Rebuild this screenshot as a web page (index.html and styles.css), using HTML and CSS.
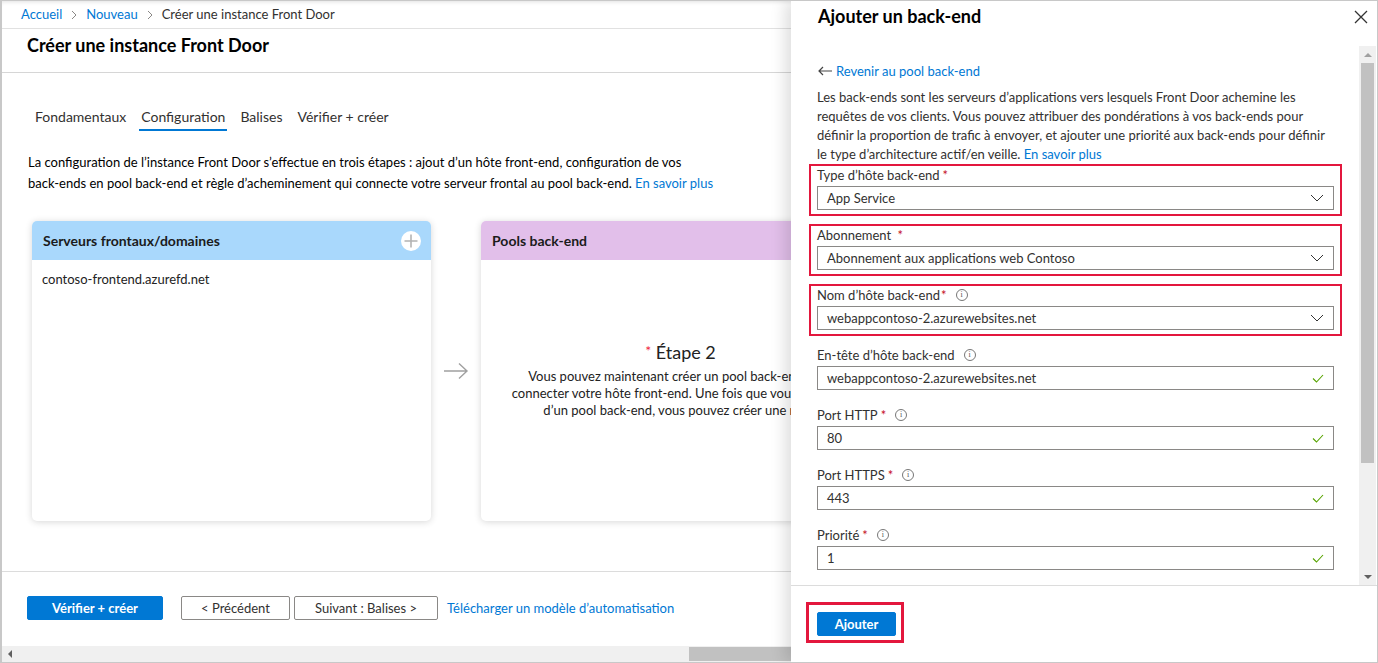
FILE: index.html
```html
<!DOCTYPE html>
<html lang="fr">
<head>
<meta charset="utf-8">
<title>Créer une instance Front Door</title>
<link rel="stylesheet" href="styles.css">
</head>
<body>
<div class="frame">
  <div class="main">
    <div class="crumbs">
      <a class="link">Accueil</a>
      <svg class="chev" width="8" height="10" viewBox="0 0 8 10"><path d="M2 1l4 4-4 4" fill="none" stroke="#8a8886" stroke-width="1"/></svg>
      <a class="link">Nouveau</a>
      <svg class="chev" width="8" height="10" viewBox="0 0 8 10"><path d="M2 1l4 4-4 4" fill="none" stroke="#8a8886" stroke-width="1"/></svg>
      <span>Créer une instance Front Door</span>
    </div>
    <div class="titlebar"><h1>Créer une instance Front Door</h1></div>
    <div class="content">
      <div class="tabs">
        <span class="tab">Fondamentaux</span>
        <span class="tab active">Configuration</span>
        <span class="tab">Balises</span>
        <span class="tab">Vérifier + créer</span>
      </div>
      <p class="desc">La configuration de l’instance Front Door s’effectue en trois étapes : ajout d’un hôte front-end, configuration de vos<br>back-ends en pool back-end et règle d’acheminement qui connecte votre serveur frontal au pool back-end. <a class="link">En savoir plus</a></p>
      <div class="cards">
        <div class="card">
          <div class="card-head blue">
            <span>Serveurs frontaux/domaines</span>
            <span class="plus"><svg width="20" height="20" viewBox="0 0 20 20"><circle cx="10" cy="10" r="10" fill="#fff"/><path d="M10 3.5v13M3.5 10h13" stroke="#b3b3b3" stroke-width="1.6"/></svg></span>
          </div>
          <div class="card-body"><div class="host">contoso-frontend.azurefd.net</div></div>
        </div>
        <div class="arrow"><svg width="26" height="18" viewBox="0 0 26 18"><path d="M1 9h23M16 1.5l8 7.5-8 7.5" fill="none" stroke="#a0a0a0" stroke-width="1.4"/></svg></div>
        <div class="card">
          <div class="card-head purple"><span>Pools back-end</span></div>
          <div class="card-body center">
            <div class="step"><span class="req">*</span> Étape 2</div>
            <p class="step-text">Vous pouvez maintenant créer un pool back-end pour<br>connecter votre hôte front-end. Une fois que vous disposez<br>d’un pool back-end, vous pouvez créer une règle</p>
          </div>
        </div>
      </div>
    </div>
    <div class="footer">
      <button class="btn primary wide">Vérifier + créer</button>
      <button class="btn ghost prev">&lt; Précédent</button>
      <button class="btn ghost next">Suivant : Balises &gt;</button>
      <a class="link dl">Télécharger un modèle d’automatisation</a>
    </div>
    <div class="hscroll">
      <svg class="larr" width="6" height="8" viewBox="0 0 6 8"><path d="M5 0v8L1 4z" fill="#606060"/></svg>
      <div class="hthumb"></div>
    </div>
  </div>

  <aside class="panel">
    <div class="panel-head">
      <h2>Ajouter un back-end</h2>
      <svg class="close" width="14" height="14" viewBox="0 0 14 14"><path d="M1 1l12 12M13 1L1 13" stroke="#333" stroke-width="1.3"/></svg>
    </div>
    <div class="panel-body">
      <div class="form">
        <a class="back link"><svg width="16" height="10" viewBox="0 0 16 10"><path d="M15 5H2M6 1L2 5l4 4" fill="none" stroke="#444" stroke-width="1.2"/></svg>Revenir au pool back-end</a>
        <p class="intro">Les back-ends sont les serveurs d’applications vers lesquels Front Door achemine les<br>requêtes de vos clients. Vous pouvez attribuer des pondérations à vos back-ends pour<br>définir la proportion de trafic à envoyer, et ajouter une priorité aux back-ends pour définir<br>le type d’architecture actif/en veille. <a class="link">En savoir plus</a></p>

        <div class="field hl">
          <div class="label">Type d’hôte back-end <span class="req">*</span></div>
          <div class="input">App Service<svg class="dd" width="14" height="8" viewBox="0 0 14 8"><path d="M1 1l6 6 6-6" fill="none" stroke="#333" stroke-width="1"/></svg></div>
        </div>
        <div class="field hl">
          <div class="label">Abonnement <span class="req">&nbsp;*</span></div>
          <div class="input">Abonnement aux applications web Contoso<svg class="dd" width="14" height="8" viewBox="0 0 14 8"><path d="M1 1l6 6 6-6" fill="none" stroke="#333" stroke-width="1"/></svg></div>
        </div>
        <div class="field hl">
          <div class="label">Nom d’hôte back-end<span class="req tight">*</span><span class="info">i</span></div>
          <div class="input">webappcontoso-2.azurewebsites.net<svg class="dd" width="14" height="8" viewBox="0 0 14 8"><path d="M1 1l6 6 6-6" fill="none" stroke="#333" stroke-width="1"/></svg></div>
        </div>
        <div class="field">
          <div class="label">En-tête d’hôte back-end<span class="info">i</span></div>
          <div class="input">webappcontoso-2.azurewebsites.net<svg class="ok" width="12" height="9" viewBox="0 0 12 9"><path d="M1 4.5l3.5 3.5L11 1" fill="none" stroke="#57a300" stroke-width="1.1"/></svg></div>
        </div>
        <div class="field">
          <div class="label">Port HTTP <span class="req">*</span><span class="info">i</span></div>
          <div class="input">80<svg class="ok" width="12" height="9" viewBox="0 0 12 9"><path d="M1 4.5l3.5 3.5L11 1" fill="none" stroke="#57a300" stroke-width="1.1"/></svg></div>
        </div>
        <div class="field">
          <div class="label">Port HTTPS <span class="req">*</span><span class="info">i</span></div>
          <div class="input">443<svg class="ok" width="12" height="9" viewBox="0 0 12 9"><path d="M1 4.5l3.5 3.5L11 1" fill="none" stroke="#57a300" stroke-width="1.1"/></svg></div>
        </div>
        <div class="field">
          <div class="label">Priorité <span class="req">*</span><span class="info">i</span></div>
          <div class="input">1<svg class="ok" width="12" height="9" viewBox="0 0 12 9"><path d="M1 4.5l3.5 3.5L11 1" fill="none" stroke="#57a300" stroke-width="1.1"/></svg></div>
        </div>
      </div>
      <div class="vscroll">
        <svg class="varr" width="8" height="6" viewBox="0 0 8 6"><path d="M0 5h8L4 1z" fill="#a0a0a0"/></svg>
        <div class="vthumb"></div>
        <svg class="varr down" width="8" height="6" viewBox="0 0 8 6"><path d="M0 1h8L4 5z" fill="#606060"/></svg>
      </div>
    </div>
    <div class="panel-foot">
      <div class="hlbox"><button class="btn primary add">Ajouter</button></div>
    </div>
  </aside>
</div>
</body>
</html>
```

FILE: styles.css
```css
* { box-sizing: border-box; }
html, body { margin: 0; padding: 0; }
body {
  width: 1378px;
  height: 663px;
  overflow: hidden;
  font-family: "Lato", "Liberation Sans", sans-serif;
  font-size: 13px;
  color: #323130;
  background: #fff;
}
.frame {
  position: relative;
  width: 1378px;
  height: 663px;
  border: 1px solid #c8c8c8;
  border-left-width: 2px;
  overflow: hidden;
}
.link { color: #0078d4; text-decoration: none; cursor: pointer; }

.main {
  display: flex;
  flex-direction: column;
  height: 100%;
}
.crumbs {
  height: 28px;
  display: flex;
  align-items: center;
  gap: 8px;
  padding-left: 19px;
  padding-bottom: 1px;
  border-bottom: 1px solid #e1e1e1;
  color: #323130;
  box-shadow: inset 0 4px 4px -3px rgba(0,0,0,0.12);
}
.chev { margin-top: 1px; }
.titlebar {
  height: 44px;
  display: flex;
  align-items: flex-start;
  padding: 5px 0 0 25px;
  border-bottom: 1px solid #d6d6d6;
}
h1 {
  margin: 0;
  font-size: 18px;
  line-height: 22px;
  font-weight: 700;
  color: #000;
}
.content {
  flex: 1;
  padding: 34px 0 0 26px;
}
.tabs {
  display: flex;
  gap: 11px;
  padding-left: 5px;
}
.tab {
  font-size: 14px;
  line-height: 20px;
  padding: 0 2px 2px;
  border-bottom: 2px solid transparent;
  color: #323130;
}
.tab.active { border-bottom-color: #0078d4; }
.desc {
  margin: 21px 0 0 0;
  line-height: 21px;
  color: #000;
}
.cards {
  margin-top: 27px;
  margin-left: 4px;
  display: flex;
  align-items: center;
}
.card {
  flex: none;
  width: 399px;
  height: 300px;
  border-radius: 5px;
  box-shadow: 0 1px 7px rgba(0,0,0,0.16);
  background: #fff;
  display: flex;
  flex-direction: column;
  overflow: hidden;
}
.card-head {
  height: 39px;
  flex: none;
  display: flex;
  align-items: center;
  justify-content: space-between;
  padding: 0 10px 0 11px;
  font-size: 14px;
  font-weight: 700;
  color: #1b1b1b;
}
.card-head.blue { background: #a9d8fc; }
.card-head.purple { background: #e2bfea; }
.plus { display: flex; }
.card-body { flex: 1; padding: 10px 10px; }
.host { line-height: 18px; color: #222; }
.card-body.center {
  display: flex;
  flex-direction: column;
  align-items: center;
  justify-content: center;
  text-align: center;
  padding-bottom: 34px;
}
.step { font-size: 18px; color: #222; line-height: 24px; }
.req { color: #c50f1f; }
.step .req { color: #f0253c; font-size: 14px; vertical-align: 3px; }
.step-text { margin: 4px 0 0; line-height: 17px; color: #222; }
.arrow {
  width: 50px;
  flex: none;
  display: flex;
  justify-content: center;
}

.footer {
  height: 75px;
  flex: none;
  border-top: 1px solid #dcdcdc;
  display: flex;
  align-items: flex-start;
  padding: 24px 0 0 25px;
}
.btn {
  font-family: inherit;
  font-size: 13px;
  height: 24px;
  border-radius: 2px;
  padding: 0;
  cursor: pointer;
}
.btn.primary {
  background: #0078d4;
  border: 1px solid #0078d4;
  color: #fff;
  font-weight: 700;
}
.btn.wide { width: 136px; }
.btn.ghost {
  background: #fff;
  border: 1px solid #8a8886;
  color: #323130;
}
.prev { width: 109px; margin-left: 18px; }
.next { width: 144px; margin-left: 4px; }
.dl { margin-left: 9px; line-height: 24px; }

.hscroll {
  height: 16px;
  flex: none;
  background: #f0f0f0;
  position: relative;
  display: flex;
  align-items: center;
  padding-left: 5px;
}
.hthumb {
  position: absolute;
  left: 687px;
  top: 1px;
  width: 200px;
  height: 14px;
  background: #c1c1c1;
}

/* side panel overlaying the page */
.panel {
  position: absolute;
  top: 0;
  right: 0;
  bottom: 0;
  width: 586px;
  background: #fff;
  box-shadow: -6px 0 14px rgba(0,0,0,0.13);
  display: flex;
  flex-direction: column;
}
.panel-head {
  height: 45px;
  flex: none;
  display: flex;
  justify-content: space-between;
  align-items: flex-start;
  padding: 4px 9px 0 27px;
}
h2 {
  margin: 0;
  font-size: 18px;
  font-weight: 700;
  color: #000;
  line-height: 22px;
}
.close { margin-top: 5px; }
.panel-body {
  flex: 1;
  display: flex;
  min-height: 0;
  border-bottom: 1px solid #dcdcdc;
}
.form {
  flex: 1;
  padding: 16px 25px 0 26px;
  overflow: hidden;
}
.back {
  display: flex;
  align-items: center;
  gap: 3px;
  line-height: 18px;
}
.intro {
  margin: 8px 0 0;
  line-height: 19px;
  color: #323130;
}
.field {
  margin: 0 -8px 8px;
  height: 52px;
  border: 2px solid transparent;
  padding: 0 6px;
}
.field.hl { border-color: #e3173d; }
.label {
  height: 18px;
  line-height: 18px;
  margin-bottom: 2px;
  display: flex;
  align-items: center;
  color: #323130;
}
.label .req { margin-left: 3px; }
.label .req.tight { margin-left: 1px; }
.info {
  width: 12px;
  height: 12px;
  border: 1px solid #777;
  border-radius: 50%;
  font-size: 8px;
  line-height: 10px;
  text-align: center;
  color: #555;
  margin-left: 9px;
  font-family: "Liberation Serif", serif;
}
.input {
  height: 24px;
  border: 1px solid #8a8886;
  display: flex;
  align-items: center;
  justify-content: space-between;
  padding: 0 9px 0 9px;
  color: #323130;
}
.vscroll {
  width: 17px;
  flex: none;
  background: #f0f0f0;
  display: flex;
  flex-direction: column;
  align-items: center;
  margin-right: 1px;
}
.varr { margin: 6px 0 5px; }
.varr.down { margin-top: auto; }
.vthumb {
  width: 13px;
  height: 400px;
  background: #c1c1c1;
}
.panel-foot {
  height: 76px;
  flex: none;
  padding: 16px 0 0 15px;
}
.hlbox {
  display: inline-block;
  border: 3px solid #e3173d;
  padding: 7px 5px 4px 8px;
}
.btn.add { width: 79px; display: block; }
```
